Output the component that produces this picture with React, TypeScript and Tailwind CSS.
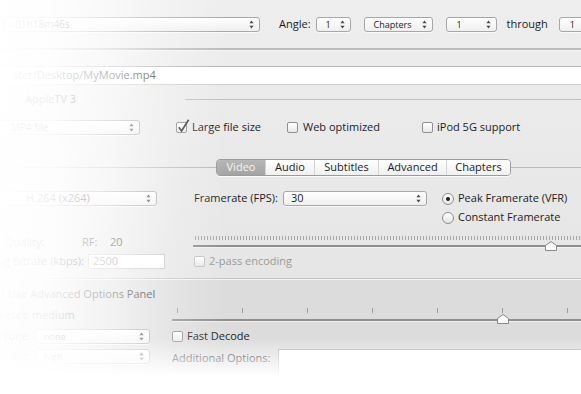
import React from 'react';

const Arrows: React.FC = () => (
  <svg width="5" height="9" viewBox="0 0 5 9" className="shrink-0">
    <path d="M2.5 0.5 L4.6 3.2 H0.4 Z" fill="#4a4a4a" />
    <path d="M2.5 8.5 L4.6 5.8 H0.4 Z" fill="#4a4a4a" />
  </svg>
);

type PopupProps = { text: string; className: string; size?: string };

const Popup: React.FC<PopupProps> = ({ text, className, size = 'text-[11px]' }) => (
  <div
    className={`flex h-[15px] shrink-0 items-center justify-between rounded-[3px] border border-[#a7a7a7] bg-gradient-to-b from-white to-[#efefef] pr-[5px] shadow-[0_1px_0_rgba(255,255,255,0.7)] ${size} ${className}`}
  >
    <span className="whitespace-nowrap">{text}</span>
    <Arrows />
  </div>
);

const Checkbox: React.FC<{ checked?: boolean; disabled?: boolean }> = ({ checked, disabled }) => (
  <span
    className={`relative inline-block h-[11px] w-[11px] shrink-0 rounded-[2px] border bg-gradient-to-b from-white to-[#e8e8e8] ${
      disabled ? 'border-[#c2c2c2]' : 'border-[#8f8f8f]'
    }`}
  >
    {checked && (
      <svg className="absolute -top-[4px] left-[0px]" width="13" height="14" viewBox="0 0 13 14">
        <path d="M1.8 8.2 L4.6 12 L11.6 0.8" fill="none" stroke="#3a3a3a" strokeWidth="1.7" />
      </svg>
    )}
  </span>
);

const Radio: React.FC<{ on?: boolean }> = ({ on }) => (
  <span className="flex h-[12px] w-[12px] shrink-0 items-center justify-center rounded-full border border-[#8f8f8f] bg-gradient-to-b from-white to-[#e4e4e4]">
    {on && <span className="h-[4px] w-[4px] rounded-full bg-[#1e1e1e]" />}
  </span>
);

const Knob: React.FC = () => (
  <svg width="12" height="10" viewBox="0 0 12 10">
    <path d="M0.5 4.5 L6 0.5 L11.5 4.5 V9.5 H0.5 Z" fill="#fbfbfb" stroke="#8a8a8a" />
  </svg>
);

const tabs = [
  { label: 'Video', w: 'w-[48px]' },
  { label: 'Audio', w: 'w-[49px]' },
  { label: 'Subtitles', w: 'w-[64px]' },
  { label: 'Advanced', w: 'w-[68px]' },
  { label: 'Chapters', w: 'w-[64px]' },
];

const presetTicks = [0, 1, 2, 3, 4, 5, 6];

export default function App() {
  return (
    <div className="relative h-[394px] w-[581px] overflow-hidden bg-gradient-to-b from-[#eeeeee] to-[#e2e2e2] font-['Open_Sans','Liberation_Sans',sans-serif] text-[11px] text-[#1c1c1c]">
      <div className="flex flex-col pt-[17px]">
        {/* source / range */}
        <div className="flex h-[15px] items-center">
          <Popup text="1 - 01h18m46s" size="text-[10px]" className="-ml-[10px] w-[270px] pl-[10px]" />
          <span className="ml-[19px] shrink-0">Angle:</span>
          <Popup text="1" size="text-[9px]" className="ml-[5px] w-[35px] pl-[9px]" />
          <Popup text="Chapters" size="text-[9px]" className="ml-[13px] w-[69px] pl-[9px]" />
          <Popup text="1" size="text-[9px]" className="ml-[13px] w-[51px] pl-[10px]" />
          <span className="ml-[10px] shrink-0">through</span>
          <Popup text="1" size="text-[9px]" className="ml-[11px] w-[50px] pl-[10px]" />
        </div>

        <div className="mt-[16px] h-[2px] bg-[#bcbcbc]" />
        <div className="h-px bg-[#f6f6f6]" />

        {/* destination */}
        <div className="mt-[15px] flex h-[19px] items-center border-y border-t-[#b4b4b4] border-b-[#cdcdcd] bg-white pl-[13px] text-[#333]">
          ster/Desktop/MyMovie.mp4
        </div>

        {/* preset name */}
        <div className="mt-[6px] flex h-[16px] items-center">
          <span className="w-[185px] shrink-0 pl-[25px]">AppleTV 3</span>
          <div className="h-px flex-1 bg-[#c0c0c0]" />
        </div>

        {/* format + options */}
        <div className="mt-[13px] flex h-[15px] items-center">
          <Popup text="MP4 file" size="text-[10px]" className="-ml-[10px] w-[150px] pl-[20px]" />
          <div className="ml-[36px] flex w-[111px] shrink-0 items-center gap-[5px]">
            <Checkbox checked />
            <span>Large file size</span>
          </div>
          <div className="flex w-[135px] shrink-0 items-center gap-[5px]">
            <Checkbox />
            <span>Web optimized</span>
          </div>
          <div className="flex shrink-0 items-center gap-[4px]">
            <Checkbox />
            <span>iPod 5G support</span>
          </div>
        </div>

        {/* tabs */}
        <div className="mt-[24px] flex h-[17px] items-center">
          <div className="h-px w-[216px] shrink-0 bg-[#b9b9b9]" />
          <div className="flex h-[17px] shrink-0 overflow-hidden rounded-[4px] border border-[#9b9b9b] shadow-[0_1px_0_rgba(255,255,255,0.8)]">
            {tabs.map((t, i) => (
              <div
                key={t.label}
                className={`flex h-full items-center justify-center ${t.w} ${
                  i === 0
                    ? 'bg-gradient-to-b from-[#b7b7b7] to-[#a3a3a3] text-[#f5f5f5]'
                    : 'border-l border-[#d4d4d4] bg-gradient-to-b from-white to-[#f0f0f0]'
                }`}
              >
                {t.label}
              </div>
            ))}
          </div>
          <div className="h-px flex-1 bg-[#b9b9b9]" />
        </div>

        {/* encoder / framerate */}
        <div className="mt-[14px] flex h-[17px] items-center">
          <Popup text="H.264 (x264)" className="-ml-[10px] w-[167px] pl-[35px]" />
          <span className="ml-[37px] w-[89px] shrink-0">Framerate (FPS):</span>
          <Popup text="30" className="w-[144px] pl-[7px]" />
          <div className="ml-[15px] flex shrink-0 items-center gap-[4px]">
            <Radio on />
            <span>Peak Framerate (VFR)</span>
          </div>
        </div>
        <div className="mt-[3px] flex h-[15px] items-center">
          <div className="ml-[442px] flex shrink-0 items-center gap-[4px]">
            <Radio />
            <span>Constant Framerate</span>
          </div>
        </div>

        {/* quality */}
        <div className="mt-[8px] flex h-[18px]">
          <div className="flex w-[193px] shrink-0 items-center">
            <span className="w-[82px] shrink-0 pl-[5px]">Quality:</span>
            <span className="w-[28px] shrink-0">RF:</span>
            <span>20</span>
          </div>
          <div className="relative flex flex-1 flex-col pt-[3px]">
            <div className="ml-[2px] h-[4px] bg-[repeating-linear-gradient(to_right,#a8a8a8_0px,#a8a8a8_1px,transparent_1px,transparent_3px)]" />
            <div className="mt-[5px] h-[2px] bg-[#8e8e8e]" />
            <div className="h-px bg-[#f2f2f2]" />
            <div className="absolute left-[352px] top-[8px]">
              <Knob />
            </div>
          </div>
        </div>

        {/* bitrate */}
        <div className="mt-[2px] flex h-[17px] items-center">
          <div className="flex w-[193px] shrink-0 items-center">
            <div className="flex w-[84px] shrink-0 justify-end whitespace-nowrap">Avg Bitrate (kbps):</div>
            <div className="ml-[4px] flex h-[15px] w-[77px] items-center border border-[#c6c6c6] bg-white pl-[4px] text-[#8c8c8c]">
              2500
            </div>
          </div>
          <div className="ml-[1px] flex items-center gap-[4px] text-[#9a9a9a]">
            <Checkbox disabled />
            <span>2-pass encoding</span>
          </div>
        </div>

        <div className="mt-[8px] h-px bg-[#c4c4c4]" />
        <div className="h-px bg-[#f3f3f3]" />

        {/* advanced panel */}
        <div className="flex flex-1 flex-col bg-[#dcdcdc] pt-[7px]">
          <div className="flex h-[14px] items-center gap-[5px]">
            <span className="-ml-[8px]">
              <Checkbox />
            </span>
            <span>Use Advanced Options Panel</span>
          </div>

          <div className="mt-[6px] flex h-[17px]">
            <div className="flex w-[172px] shrink-0 items-center">
              <div className="flex w-[29px] shrink-0 justify-end whitespace-nowrap">x264 Preset:</div>
              <span className="ml-[3px]">medium</span>
            </div>
            <div className="relative flex flex-1 flex-col pt-[1px]">
              <div className="flex h-[5px] gap-[64px] pl-[5px]">
                {presetTicks.map((t) => (
                  <div key={t} className="h-full w-px shrink-0 bg-[#9c9c9c]" />
                ))}
              </div>
              <div className="mt-[6px] h-[2px] bg-[#8e8e8e]" />
              <div className="h-px bg-[#eeeeee]" />
              <div className="absolute left-[325px] top-[7px]">
                <Knob />
              </div>
            </div>
          </div>

          <div className="mt-[5px] flex h-[15px] items-center">
            <div className="flex w-[172px] shrink-0 items-center">
              <div className="flex w-[31px] shrink-0 justify-end">Tune:</div>
              <Popup text="none" size="text-[9px]" className="ml-[4px] w-[115px] pl-[8px]" />
            </div>
            <div className="flex items-center gap-[4px]">
              <Checkbox />
              <span>Fast Decode</span>
            </div>
          </div>

          <div className="mt-[5px] flex items-start">
            <div className="flex h-[15px] w-[172px] shrink-0 items-center">
              <div className="flex w-[31px] shrink-0 justify-end">Profile:</div>
              <Popup text="high" size="text-[9px]" className="ml-[4px] w-[115px] pl-[8px]" />
            </div>
            <span className="mt-[1px] w-[106px] shrink-0">Additional Options:</span>
            <div className="h-[44px] flex-1 border-l border-t border-[#b5b5b5] bg-white" />
          </div>
        </div>
      </div>

      {/* fades */}
      <div className="pointer-events-none absolute inset-y-0 left-0 z-10 w-[230px] bg-[linear-gradient(to_right,rgba(255,255,255,0.98)_0px,rgba(255,255,255,0.92)_50px,rgba(255,255,255,0.65)_110px,rgba(255,255,255,0.25)_170px,rgba(255,255,255,0)_225px)]" />
      <div className="pointer-events-none absolute inset-x-0 bottom-0 top-[338px] z-10 bg-[linear-gradient(to_bottom,rgba(255,255,255,0)_0px,rgba(255,255,255,1)_38px)]" />
    </div>
  );
}
